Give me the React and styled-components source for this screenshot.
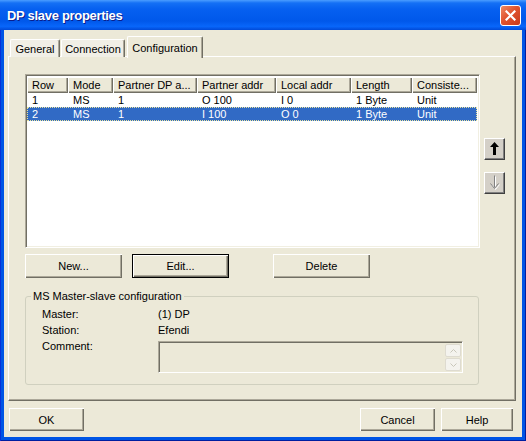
import React from "react";
import styled, { createGlobalStyle } from "styled-components";

const GlobalStyle = createGlobalStyle`
  html, body {
    margin: 0;
    padding: 0;
    background: #fff;
    overflow: hidden;
  }
  * {
    box-sizing: border-box;
  }
`;

const FONT = `"Liberation Sans", Arial, sans-serif`;

const Window = styled.div`
  width: 526px;
  height: 441px;
  display: flex;
  flex-direction: column;
  background: #0055e5;
  box-shadow: inset 1px 0 0 #0831d9, inset -1px 0 0 #001ea0, inset 0 -1px 0 #001ea0;
  font: 11px ${FONT};
  color: #000;
`;

const TitleBar = styled.div`
  height: 30px;
  flex: none;
  display: flex;
  align-items: center;
  justify-content: space-between;
  padding: 0 5px 0 7px;
  background: linear-gradient(
    to bottom,
    #4a9dff 0%,
    #1470f5 10%,
    #0660f0 30%,
    #0058ea 70%,
    #0866fa 88%,
    #004ad8 100%
  );
`;

const Title = styled.span`
  color: #fff;
  font: bold 13px ${FONT};
  letter-spacing: -0.3px;
  text-shadow: 1px 1px 0 #0a1e8c;
  margin-top: 1px;
`;

const CloseButton = styled.div`
  width: 21px;
  height: 21px;
  border: 1px solid #fff;
  border-radius: 3px;
  background: linear-gradient(135deg, #ef8a64 0%, #e0532e 45%, #c8391a 100%);
  display: flex;
  align-items: center;
  justify-content: center;
  margin-top: 1px;
`;

const Body = styled.div`
  flex: 1;
  margin: 0 4px 4px 4px;
  background: #ece9d8;
  padding: 6px 9px 0 0;
  display: flex;
  flex-direction: column;
`;

const TabStrip = styled.div`
  display: flex;
  align-items: flex-end;
  height: 21px;
  margin-left: 6px;
  gap: 1px;
  position: relative;
  z-index: 1;
`;

const Tab = styled.div`
  width: ${(p) => p.$w}px;
  height: ${(p) => (p.$active ? 21 : 18)}px;
  display: flex;
  align-items: center;
  justify-content: center;
  padding-top: ${(p) => (p.$active ? 0 : 1)}px;
  background: ${(p) => (p.$active ? "#ece9d8" : "#f1efe6")};
  border-top: 1px solid #fff;
  border-left: 1px solid #fff;
  border-right: 1px solid #716f64;
  border-radius: 2px 2px 0 0;
  box-shadow: inset -1px 0 0 #aca899;
  ${(p) => p.$active && "margin-left: 1px; margin-bottom: -1px; height: 22px;"}
`;

const Panel = styled.div`
  margin-left: 4px;
  width: 508px;
  height: 345px;
  margin-top: -1px;
  border-top: 1px solid #fff;
  border-left: 1px solid #fff;
  border-right: 1px solid #716f64;
  border-bottom: 1px solid #716f64;
  box-shadow: inset -1px -1px 0 #aca899;
  padding: 17px 0 0 16px;
  display: flex;
  flex-direction: column;
`;

const ListArea = styled.div`
  display: flex;
  gap: 4px;
`;

const ListView = styled.div`
  width: 455px;
  height: 174px;
  background: #fff;
  border-top: 1px solid #aca899;
  border-left: 1px solid #aca899;
  border-right: 1px solid #fff;
  border-bottom: 1px solid #fff;
  box-shadow: inset 1px 1px 0 #716f64, inset -1px -1px 0 #f1efe2;
  padding: 1px;
`;

const HeaderRow = styled.div`
  display: flex;
  height: 16px;
  margin-top: 1px;
`;

const HeaderCell = styled.div`
  width: ${(p) => p.$w}px;
  flex: none;
  padding-left: 5px;
  line-height: 16px;
  white-space: nowrap;
  overflow: hidden;
  background: #ece9d8;
  box-shadow: inset 1px 1px 0 #fff, inset -1px -1px 0 #716f64, inset -2px -2px 0 #aca899;
`;

const Row = styled.div`
  display: flex;
  height: 14px;
  width: 450px;
  background: ${(p) => (p.$selected ? "#316ac5" : "transparent")};
  color: ${(p) => (p.$selected ? "#fff" : "#000")};
  outline: ${(p) => (p.$selected ? "1px dotted #e8e4a0" : "none")};
  outline-offset: -1px;
`;

const Cell = styled.div`
  width: ${(p) => p.$w}px;
  flex: none;
  padding-left: 5px;
  line-height: 14px;
  white-space: nowrap;
  overflow: hidden;
`;

const SideButtons = styled.div`
  display: flex;
  flex-direction: column;
  gap: 12px;
  padding-top: 64px;
`;

const MoveButton = styled.div`
  width: 21px;
  height: 22px;
  background: #d4d0c8;
  border-top: 1px solid #fff;
  border-left: 1px solid #fff;
  border-right: 1px solid #404040;
  border-bottom: 1px solid #404040;
  box-shadow: inset -1px -1px 0 #808080;
  display: flex;
  align-items: center;
  justify-content: center;
`;

const ActionRow = styled.div`
  display: flex;
  margin-top: 6px;
`;

const Button = styled.div`
  width: ${(p) => p.$w}px;
  height: ${(p) => p.$h}px;
  margin-left: ${(p) => p.$gap || 0}px;
  display: flex;
  align-items: center;
  justify-content: center;
  background: #ece9d8;
  border: ${(p) => (p.$default ? "1px solid #000" : "none")};
  box-shadow: inset 1px 1px 0 #fff, inset -1px -1px 0 #716f64, inset -2px -2px 0 #aca899;
`;

const Group = styled.fieldset`
  margin: 12px 0 0 0;
  width: 454px;
  border: 1px solid #d0d0bf;
  border-radius: 3px;
  padding: 3px 0 11px 16px;
  min-width: 0;
`;

const Legend = styled.legend`
  padding: 0 2px;
  margin-left: -11px;
  line-height: 13px;
`;

const InfoGrid = styled.div`
  display: grid;
  grid-template-columns: 116px 1fr;
  line-height: 16px;
`;

const Label = styled.div`
  line-height: 16px;
`;

const CommentBox = styled.div`
  margin-top: 3px;
  width: 305px;
  height: 32px;
  background: #ece9d8;
  border-top: 1px solid #aca899;
  border-left: 1px solid #aca899;
  border-right: 1px solid #fff;
  border-bottom: 1px solid #fff;
  box-shadow: inset 1px 1px 0 #716f64;
  display: flex;
  justify-content: flex-end;
  padding: 2px 1px 0 0;
`;

const ScrollCol = styled.div`
  display: flex;
  flex-direction: column;
  gap: 1px;
`;

const ScrollBtn = styled.div`
  width: 16px;
  height: 13px;
  background: #f4f3ee;
  border: 1px solid #dedbd0;
  border-radius: 2px;
  display: flex;
  align-items: center;
  justify-content: center;
`;

const Footer = styled.div`
  display: flex;
  margin-top: 7px;
  padding-left: 5px;
`;

const columns = [
  { title: "Row", w: 41 },
  { title: "Mode", w: 45 },
  { title: "Partner DP a...", w: 84 },
  { title: "Partner addr", w: 79 },
  { title: "Local addr", w: 75 },
  { title: "Length", w: 61 },
  { title: "Consiste...", w: 65 },
];

const rows = [
  ["1", "MS", "1", "O 100", "I 0", "1 Byte", "Unit"],
  ["2", "MS", "1", "I 100", "O 0", "1 Byte", "Unit"],
];

const CloseIcon = () => (
  <svg width="11" height="11" viewBox="0 0 11 11">
    <path d="M1.5 1.5 L9.5 9.5 M9.5 1.5 L1.5 9.5" stroke="#fff" strokeWidth="2.2" strokeLinecap="square" />
  </svg>
);

const UpArrow = () => (
  <svg width="11" height="14" viewBox="0 0 11 14">
    <polygon points="5.5,0 10,5 7,5 7,13 4,13 4,5 1,5" fill="#000" />
  </svg>
);

const DownArrow = () => (
  <svg width="11" height="16" viewBox="0 0 11 16">
    <path d="M6.5 1.5 V13.5 M2.5 9.5 L6.5 14.5 L10.5 9.5" stroke="#fff" strokeWidth="1" fill="none" />
    <path d="M5.5 0.5 V12.5 M1.5 8.5 L5.5 13.5 L9.5 8.5" stroke="#808080" strokeWidth="1" fill="none" />
  </svg>
);

const Chevron = ({ up }) => (
  <svg width="7" height="4" viewBox="0 0 7 4">
    <path d={up ? "M0.5 3.5 L3.5 0.5 L6.5 3.5" : "M0.5 0.5 L3.5 3.5 L6.5 0.5"} stroke="#c9c7ba" fill="none" />
  </svg>
);

export default function App() {
  return (
    <>
      <GlobalStyle />
      <Window>
        <TitleBar>
          <Title>DP slave properties</Title>
          <CloseButton>
            <CloseIcon />
          </CloseButton>
        </TitleBar>
        <Body>
          <TabStrip>
            <Tab $w={50}>General</Tab>
            <Tab $w={64}>Connection</Tab>
            <Tab $w={76} $active>
              Configuration
            </Tab>
          </TabStrip>
          <Panel>
            <ListArea>
              <ListView>
                <HeaderRow>
                  {columns.map((c) => (
                    <HeaderCell key={c.title} $w={c.w}>
                      {c.title}
                    </HeaderCell>
                  ))}
                </HeaderRow>
                {rows.map((r, i) => (
                  <Row key={i} $selected={i === 1}>
                    {r.map((v, j) => (
                      <Cell key={j} $w={columns[j].w}>
                        {v}
                      </Cell>
                    ))}
                  </Row>
                ))}
              </ListView>
              <SideButtons>
                <MoveButton>
                  <UpArrow />
                </MoveButton>
                <MoveButton>
                  <DownArrow />
                </MoveButton>
              </SideButtons>
            </ListArea>
            <ActionRow>
              <Button $w={97} $h={24}>New...</Button>
              <Button $w={97} $h={24} $gap={10} $default>
                Edit...
              </Button>
              <Button $w={97} $h={24} $gap={44}>
                Delete
              </Button>
            </ActionRow>
            <Group>
              <Legend>MS Master-slave configuration</Legend>
              <InfoGrid>
                <Label>Master:</Label>
                <div>(1) DP</div>
                <Label>Station:</Label>
                <div>Efendi</div>
                <Label>Comment:</Label>
                <CommentBox>
                  <ScrollCol>
                    <ScrollBtn>
                      <Chevron up />
                    </ScrollBtn>
                    <ScrollBtn>
                      <Chevron />
                    </ScrollBtn>
                  </ScrollCol>
                </CommentBox>
              </InfoGrid>
            </Group>
          </Panel>
          <Footer>
            <Button $w={75} $h={23}>OK</Button>
            <Button $w={75} $h={23} $gap={276}>
              Cancel
            </Button>
            <Button $w={72} $h={23} $gap={6}>
              Help
            </Button>
          </Footer>
        </Body>
      </Window>
    </>
  );
}
